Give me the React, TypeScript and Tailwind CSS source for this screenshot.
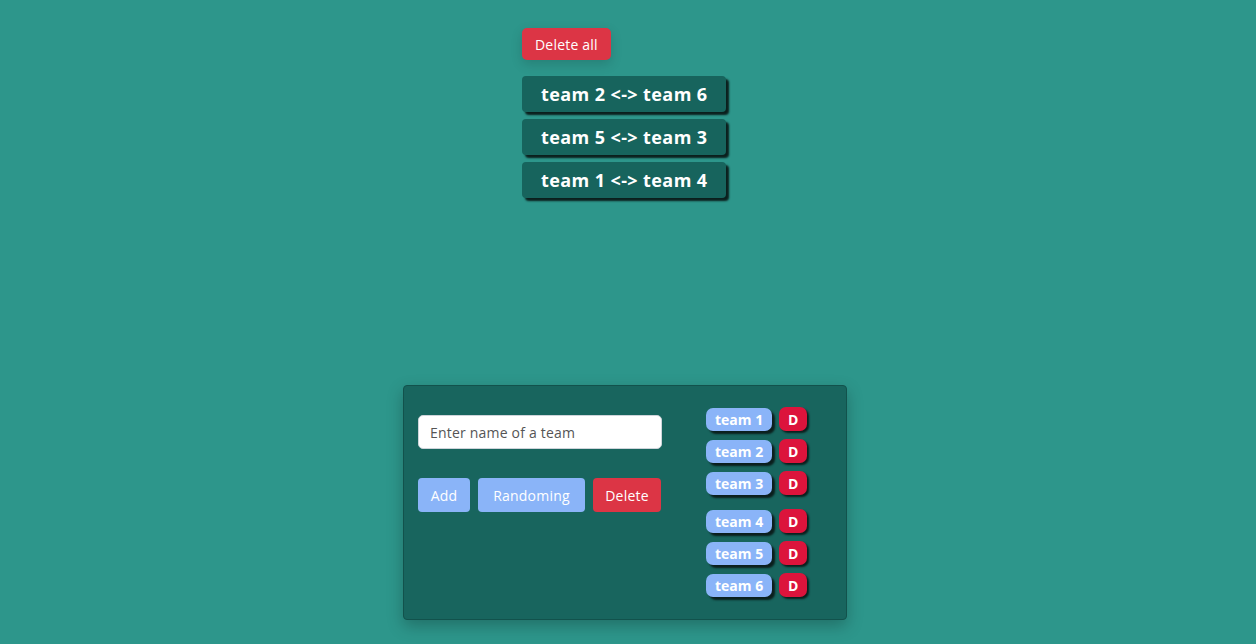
const matches = [
  ["team 2", "team 6"],
  ["team 5", "team 3"],
  ["team 1", "team 4"],
];

const teams = ["team 1", "team 2", "team 3", "team 4", "team 5", "team 6"];

export default function App() {
  return (
    <div
      className="min-h-[644px] w-full bg-[#2d968b] text-white"
      style={{ fontFamily: '"Open Sans", "Noto Sans", sans-serif' }}
    >
      <div className="flex flex-col items-start pl-[522px] pt-[28px]">
        <button className="h-[32px] rounded-[5px] bg-[#dc3545] px-[13px] text-[14px] tracking-[0.2px] shadow-[0_4px_12px_rgba(0,0,0,0.15)]">
          Delete all
        </button>
        <div className="mt-[16px] flex flex-col gap-[7px]">
          {matches.map(([a, b]) => (
            <div
              key={a}
              className="flex h-[36px] items-center rounded-[4px] bg-[#17645d] px-[19px] text-[18px] font-bold tracking-[0.4px] shadow-[3px_3px_2px_#0b1f1d]"
            >
              {a} {"<->"} {b}
            </div>
          ))}
        </div>
      </div>

      <div className="ml-[403px] mt-[187px] flex h-[235px] w-[444px] rounded-[4px] border border-[#12524c] bg-[#18655e] shadow-[0_6px_16px_rgba(0,0,0,0.25)]">
        <div className="flex w-[244px] flex-col pl-[14px] pt-[29px] box-content">
          <input
            placeholder="Enter name of a team"
            className="h-[34px] w-[244px] rounded-[5px] border border-[#ced4da] bg-white px-[11px] text-[14px] tracking-[0.2px] text-[#333] placeholder:text-[#555]"
          />
          <div className="mt-[29px] flex gap-[8px]">
            <button className="h-[34px] w-[52px] rounded-[4px] bg-[#8ab4f8] text-[14px] tracking-[0.2px]">Add</button>
            <button className="h-[34px] w-[107px] rounded-[4px] bg-[#8ab4f8] text-[14px] tracking-[0.2px]">Randoming</button>
            <button className="h-[34px] w-[68px] rounded-[4px] bg-[#dc3545] text-[14px] tracking-[0.2px]">Delete</button>
          </div>
        </div>
        <div className="ml-[44px] flex flex-col pt-[21px]">
          {teams.map((t, i) => (
            <div key={t} className={`flex items-center gap-[7px] ${i === 3 ? "mt-[14px]" : i > 0 ? "mt-[8px]" : ""}`}>
              <span className="flex h-[23px] items-center rounded-[7px] bg-[#8ab4f8] px-[9px] text-[14px] font-bold shadow-[3px_3px_2px_#0b1f1d]">
                {t}
              </span>
              <span className="flex h-[24px] w-[28px] items-center justify-center rounded-[7px] bg-[#dc143c] text-[14px] font-bold shadow-[2px_2px_2px_#0b1f1d]">
                D
              </span>
            </div>
          ))}
        </div>
      </div>
    </div>
  );
}
